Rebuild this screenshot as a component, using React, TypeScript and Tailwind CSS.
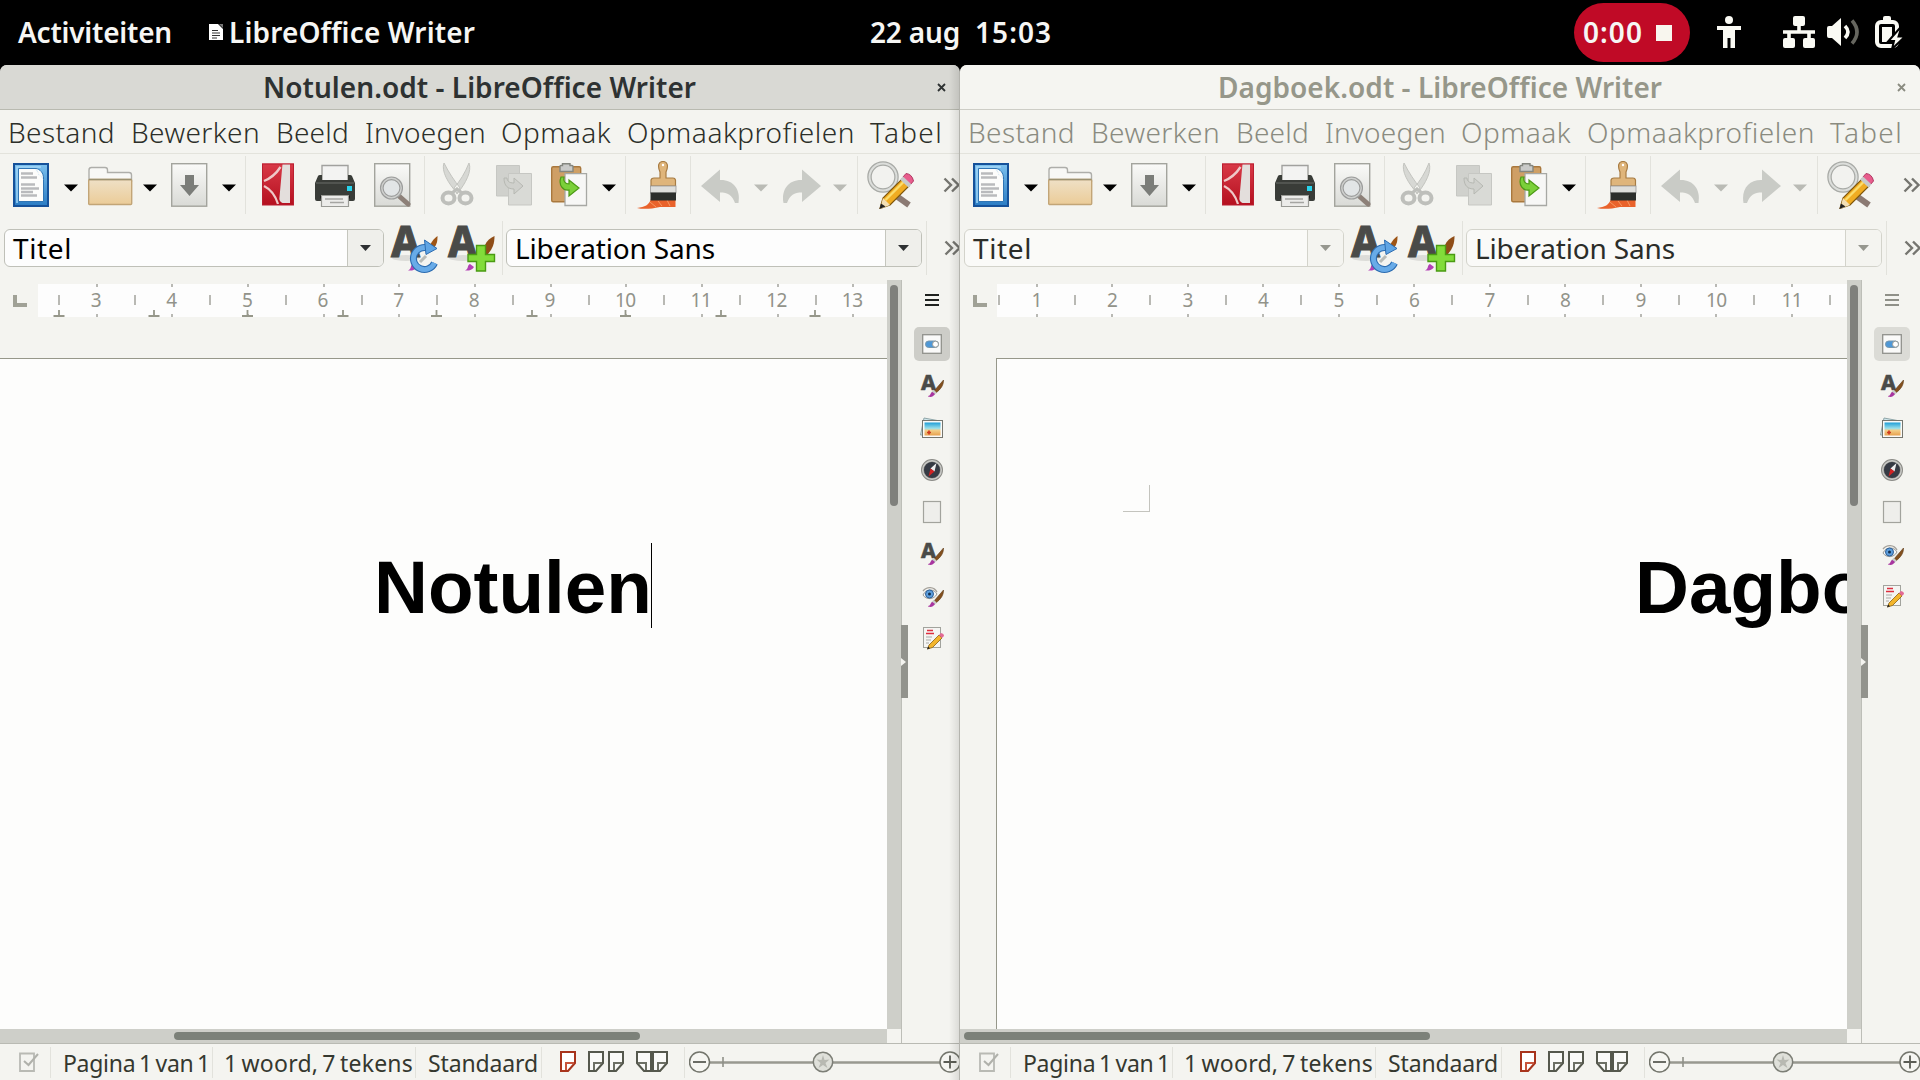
import { useLayoutEffect, useRef, useState } from "react";
import type { ReactNode } from "react";

/* Text tracked so that it fills the given width. */
function Fit({ w, className = "", children }: { w: number; className?: string; children: string }) {
  const ref = useRef<HTMLSpanElement>(null);
  const [spacing, setSpacing] = useState(0);
  useLayoutEffect(() => {
    if (ref.current) {
      const natural = ref.current.getBoundingClientRect().width;
      setSpacing((s) => s + (w - natural) / children.length);
    }
  }, [w, children]);
  return (
    <span ref={ref} className={`inline-block shrink-0 whitespace-pre ${className}`} style={{ letterSpacing: `${spacing}px` }}>
      {children}
    </span>
  );
}

function Svg({ w, h = 48, className = "", children }: { w: number; h?: number; className?: string; children: ReactNode }) {
  return (
    <svg width={w} height={h} viewBox={`0 0 ${w} ${h}`} fill="none" className={`block shrink-0 ${className}`}>
      {children}
    </svg>
  );
}

function Arrow({ className, color = "#000" }: { className: string; color?: string }) {
  return (
    <Svg w={14} h={8} className={`mt-[5px] ${className}`}>
      <path d="M0 .5H14L7 7.5Z" fill={color} />
    </Svg>
  );
}

function Sep({ className }: { className: string }) {
  return <div className={`w-px shrink-0 bg-[#e2e2dc] ${className}`} />;
}

function More({ className }: { className: string }) {
  return (
    <Svg w={17} h={16} className={className}>
      <path d="M1.5 1.5 8 8 1.5 14.5M9 1.5 15.5 8 9 14.5" stroke="#757570" strokeWidth="2.4" />
    </Svg>
  );
}

function Defs() {
  return (
    <svg width="0" height="0" className="absolute">
      <defs>
        <linearGradient id="blue" x1="0" y1="0" x2="0" y2="1">
          <stop offset="0" stopColor="#7cc0ee" />
          <stop offset="1" stopColor="#2a7cc4" />
        </linearGradient>
        <linearGradient id="tan" x1="0" y1="0" x2="0" y2="1">
          <stop offset="0" stopColor="#efe0c6" />
          <stop offset="1" stopColor="#ebcc98" />
        </linearGradient>
        <linearGradient id="paper" x1="0" y1="0" x2="0" y2="1">
          <stop offset="0" stopColor="#fafaf8" />
          <stop offset="1" stopColor="#d9dad6" />
        </linearGradient>
        <linearGradient id="red" x1="0" y1="0" x2="0" y2="1">
          <stop offset="0" stopColor="#d93a48" />
          <stop offset="1" stopColor="#b5101f" />
        </linearGradient>
        <linearGradient id="sky" x1="0" y1="0" x2="0" y2="1">
          <stop offset="0" stopColor="#1f9fd8" />
          <stop offset=".45" stopColor="#9adfea" />
          <stop offset=".6" stopColor="#f2cf8a" />
          <stop offset="1" stopColor="#e8a04c" />
        </linearGradient>
        <linearGradient id="edge" x1="0" y1="0" x2="1" y2="0">
          <stop offset="0" stopColor="#000" stopOpacity="0" />
          <stop offset="1" stopColor="#000" stopOpacity=".12" />
        </linearGradient>
      </defs>
    </svg>
  );
}

const IconNew = () => (
  <Svg w={38} className="ml-[12px]">
    <rect x="2" y="3" width="34" height="42" fill="url(#blue)" stroke="#15519a" strokeWidth="2" />
    <path d="M5 42V6H29" stroke="#a5d8f8" strokeWidth="1.5" />
    <path d="M6.5 7.5H24C28 8 31.500 12 31.500 17V40.500H6.500Z" fill="#fcfcfb" stroke="#2f75b5" />
    <path d="M23 8C27 9 27 13 26 14 30 14 31 17 31.500 19Z" fill="#d8e9f5" />
    <path d="M9 12.500H21M9 16.500H25M9 23.500H23M9 27.500H27M9 31H21M9 34.500H25" stroke="#b9babd" strokeWidth="2.400" />
  </Svg>
);
const IconOpen = () => (
  <Svg w={46} className="ml-[9px]">
    <path d="M2 20V9Q2 6.500 4.500 6.500H18Q20.500 6.500 20.500 9V11.500H42Q44.500 11.500 44.500 14V20Z" fill="#f8f8f6" stroke="#aeaeaa" strokeWidth="1.400" />
    <rect x="1.700" y="18.500" width="43" height="25" rx="1" fill="url(#tan)" stroke="#c2a577" strokeWidth="1.400" />
    <path d="M2 18.500H44.500" stroke="#9b9171" strokeWidth="1.500" />
  </Svg>
);
const IconSave = () => (
  <Svg w={38} className="ml-[13px]">
    <rect x="1.700" y="2.700" width="35" height="42.500" fill="url(#paper)" stroke="#a3a49d" strokeWidth="1.400" />
    <path d="M15 14H24V24H29L19.500 35 10 24H15Z" fill="#7b7d79" />
  </Svg>
);
const IconPdf = () => (
  <Svg w={34} className="ml-[15px]">
    <rect x="1" y="2.500" width="32" height="41.500" fill="url(#red)" />
    <path d="M21.500 3H29V42H21.500Q17.500 40 18.500 36Z" fill="#e3dedc" />
    <path d="M3 20Q13 16 19.500 6M3 25Q13 30 17 43" stroke="#efc9c9" strokeWidth="2.300" />
    <rect x="1.500" y="3" width="31" height="41" stroke="#b91f30" />
  </Svg>
);
const IconPrint = () => (
  <Svg w={42} className="ml-[19px]">
    <path d="M8 4.500H34V20H8Z" fill="#f3f3f2" stroke="#a1a19e" strokeWidth="1.400" />
    <path d="M1 22 4 15Q4.500 14 6 14H8V19H34V14H36Q37.500 14 38 15L41 22V38Q41 40 39 40H3Q1 40 1 38Z" fill="#393c38" />
    <path d="M2 22H40" stroke="#5a5d58" strokeWidth="1.500" />
    <path d="M6 36H36" stroke="#151615" strokeWidth="3" />
    <rect x="33" y="25" width="5" height="5" fill="#28d3ec" />
    <path d="M7.500 34.500H34.500V45.500H7.500Z" fill="#ececea" stroke="#9a9b96" strokeWidth="1.200" />
    <path d="M11 38H29M16 41.500H30" stroke="#a5a5a2" strokeWidth="1.400" />
  </Svg>
);
const IconPreview = () => (
  <Svg w={38} className="ml-[17px]">
    <rect x="1.700" y="2.700" width="35" height="42.500" fill="url(#paper)" stroke="#a3a49d" strokeWidth="1.400" />
    <path d="M26 35 35 43" stroke="#8d8078" strokeWidth="5" strokeLinecap="round" />
    <circle cx="18.500" cy="27" r="9.700" fill="#e2e5e6" stroke="#9c9d9c" strokeWidth="3.700" />
    <circle cx="18.500" cy="27" r="9.700" stroke="#cfd0ce" strokeWidth="1.400" />
  </Svg>
);
const IconCut = () => (
  <Svg w={34} className="ml-[15px]">
    <path d="M4 2C1 10 8 22 17 32L20 27C14 19 9 12 4 2ZM29 2C32 10 26 22 17 33L14 27C20 20 25 12 29 2Z" fill="#d7d8d4" stroke="#c3c4bf" />
    <ellipse cx="8.500" cy="37" rx="6" ry="5.500" stroke="#bebfbb" strokeWidth="4" />
    <ellipse cx="25.500" cy="37" rx="6" ry="5.500" stroke="#bebfbb" strokeWidth="4" />
    <path d="M12 32 17 28 22 32" stroke="#bebfbb" strokeWidth="3" />
  </Svg>
);
const IconCopy = () => (
  <Svg w={38} className="ml-[21px]">
    <path d="M1.500 4.500H24.500V35H1.500Z" fill="#d0d1cd" stroke="#c6c7c3" />
    <path d="M13.500 12.500H36.500V44H13.500Z" fill="#d9dad6" stroke="#c6c7c3" />
    <path d="M9 17C9 25 13 28 19 28V33L28 25 19 17V22C14 22 12 20 12 17Z" fill="#cfd0cc" stroke="#b6b8b2" />
  </Svg>
);
const IconPaste = () => (
  <Svg w={38} className="ml-[17px]">
    <rect x="1.700" y="5.700" width="29" height="35" rx="1.500" fill="#cf9f65" stroke="#a9783d" strokeWidth="1.400" />
    <path d="M10 10.500V5.500Q10 4.500 11 4.500H12.500V2.700H20V4.500H22Q23 4.500 23 5.500V10.500Z" fill="#c9cac8" stroke="#84867f" strokeWidth="1.400" />
    <path d="M15 12.700H36.500V44.500H15Z" fill="#f7f7f6" stroke="#a7a8a4" strokeWidth="1.300" />
    <path d="M11 16C8 24 13 30 19 29V35L29 27 19 19V23C15 23 13 20 14 16Z" fill="#7bd03a" stroke="#4d9a17" strokeWidth="1.200" />
  </Svg>
);
const IconBrush = () => (
  <Svg w={42} className="ml-[10px]">
    <path d="M1 47C9 46 13 44 15 38H39.500V46H24C15 48 7 48.500 1 47Z" fill="#e9622b" />
    <path d="M14 41 20 46M22 40 26 45M31 39 34 45" stroke="#f79a62" />
    <path d="M24 17V11C21 4 23 .500 27 .500S33 4 30 11V17H37Q39 17 39.500 19V25H15V19Q15.500 17 18 17Z" fill="#dfb57b" stroke="#a87c43" strokeWidth="1.200" />
    <rect x="14.500" y="25" width="25.500" height="7" fill="#dededb" stroke="#999" strokeWidth=".8" />
    <rect x="14.500" y="31.500" width="25.500" height="8" fill="#2c2e2b" />
    <circle cx="27" cy="4" r="1.200" fill="#fff" />
  </Svg>
);
function Bend({ className, flip = false }: { className: string; flip?: boolean }) {
  return (
    <Svg w={42} className={className}>
      <g transform={flip ? "translate(42 0) scale(-1 1)" : undefined}>
        <path d="M1 25 20 8.500V19C33 18.500 41 28 38.500 42H35C32 34 28 31.500 20 31.500V41Z" fill="#c9cbc6" />
      </g>
    </Svg>
  );
}
const IconFind = () => (
  <Svg w={50} className="ml-[8px]">
    <path d="M29 34 43 44" stroke="#8b7a73" strokeWidth="6" />
    <circle cx="17" cy="16" r="13.500" fill="#f2f2ef" stroke="#a8aaa6" strokeWidth="4.500" />
    <circle cx="17" cy="16" r="13.500" stroke="#dcdedb" strokeWidth="2" />
    <path d="M14 47.500 17 37 36 18 43 25 24 44Z" fill="#f0ac22" stroke="#80570c" strokeWidth="1.200" />
    <path d="M19.500 39 37.500 21" stroke="#fbdc6b" strokeWidth="2.400" />
    <path d="M37 16 40 12.500Q46 13 47.500 20L44 24Z" fill="#e85c8c" stroke="#b03a63" />
    <path d="M34 18.500 42.500 26.500 45.500 23.500 37 15.500Z" fill="#c7c9c9" />
    <path d="M14 48 17 37 24 44Z" fill="#f3dfb5" />
    <path d="M13.500 48 15 42.500 19.500 45.500Z" fill="#222" />
  </Svg>
);

function StyleIcon({ kind, className }: { kind: "update" | "new"; className: string }) {
  return (
    <Svg w={48} h={50} className={`overflow-visible ${className}`}>
      <ellipse cx="15" cy="35" rx="14" ry="3" fill="#dcdcd8" />
      <text x="0" y="33.500" fontSize="43" fontWeight="800" fontFamily="Noto Sans" textLength="29" lengthAdjust="spacingAndGlyphs" fill="#4a4b48" stroke="#4a4b48">A</text>
      <path d="M17 47.500C21 46 19 42 22 41L26 44C24 47 21 48 17 47.500Z" fill="#b341b5" />
      {kind === "update" ? (
        <>
          <path d="M46.500 13C43.500 15 41 18 39 22L43 25C46 21 46.500 18 46.500 13Z" fill="#9d5415" />
          <path d="M43.500 40A11 11 0 1 1 38 25.500" stroke="#2c6cb0" strokeWidth="7" />
          <path d="M43.500 40A11 11 0 1 1 38 25.500" stroke="#68abe8" strokeWidth="4.800" />
          <path d="M33.500 17 46 25.500 35 31.500Z" fill="#5fa5e5" stroke="#2c6cb0" />
          <path d="M35 33 29 39" stroke="#b9bcb8" strokeWidth="3" />
        </>
      ) : (
        <>
          <path d="M46.500 13C42 15 38.500 18 37 22L37 31H40C45 25 46.500 20 46.500 13Z" fill="#8f4d17" />
          <path d="M28.500 22.500H37.500V31.500H46.500V38.500H37.500V48H28.500V38.500H20V31.500H28.500Z" fill="#82dc3a" stroke="#4a9b13" strokeWidth="1.400" />
        </>
      )}
    </Svg>
  );
}

const PaintBrush = () => (
  <>
    <path d="M23.500 6 14 17 16 19C20.500 15 23.500 12 23.500 6Z" fill="#84511f" stroke="#5d3814" strokeWidth=".6" />
    <path d="M12.500 17 15.500 20" stroke="#c9ccc8" strokeWidth="3.500" />
    <path d="M8 22C11 22 10 18.500 12.500 18L15 20C13 23 11 23.500 8 22.500Z" fill="#a8359f" />
  </>
);

function SideIcon({ name }: { name: string }) {
  return (
    <Svg w={24} h={24} className="overflow-visible">
      {name === "properties" && (
        <>
          <rect x="2.700" y="2.700" width="18.600" height="18.600" fill="#fafaf9" stroke="#90918c" strokeWidth="1.300" />
          <rect x="5.500" y="9" width="13" height="6.500" rx="3.200" fill="#4e97d6" stroke="#7797ad" />
          <circle cx="15.500" cy="12.200" r="3" fill="#fff" stroke="#9a9c98" />
        </>
      )}
      {name === "styles" && (
        <>
          <text x="1" y="15.500" fontSize="21" fontWeight="800" fontFamily="Noto Sans" fill="#4a4b48" stroke="#4a4b48" strokeWidth=".5">A</text>
          <PaintBrush />
        </>
      )}
      {name === "gallery" && (
        <>
          <path d="M4 2 20 5 17 19 .500 19Z" fill="#cfe6ec" stroke="#90a6a8" />
          <rect x="2.500" y="4.500" width="20" height="17" fill="#fafaf8" stroke="#75766f" />
          <rect x="4.500" y="6.500" width="16" height="13" fill="url(#sky)" />
          <path d="M7 16.500H11M9 14.500V18.500" stroke="#d03a1e" strokeWidth="1.700" />
        </>
      )}
      {name === "navigator" && (
        <>
          <circle cx="12" cy="12" r="9.500" fill="#353a43" stroke="#8b8b86" strokeWidth="3" />
          <circle cx="12" cy="12" r="9.300" stroke="#c9cac7" strokeWidth="1.400" />
          <path d="M16.500 5 14.500 13.500 10.500 10.500Z" fill="#eee" />
          <path d="M8.500 18.500 10.500 10.500 14.500 13.500Z" fill="#d02323" />
        </>
      )}
      {name === "page" && <rect x="3.500" y="1.500" width="17" height="21" fill="#eeeeeb" stroke="#a2a39d" strokeWidth="1.200" />}
      {name === "inspector" && (
        <>
          <path d="M3 11C6 4.500 14 4.500 17 10 14 16 6 16 3 11Z" fill="#f6f6f5" stroke="#9a9b98" />
          <circle cx="9.500" cy="10" r="4" fill="#5d9edc" stroke="#2b5f99" />
          <circle cx="9.500" cy="10" r="1.500" fill="#14304f" />
          <path d="M3 7C7 2 14 2.500 17 8" stroke="#a5a19a" strokeWidth="1.300" />
          <PaintBrush />
        </>
      )}
      {name === "changes" && (
        <>
          <rect x="3.500" y="1.500" width="17" height="20" fill="#f5f5f3" stroke="#a2a39d" />
          <path d="M7 4.500H13M6 7.500H14" stroke="#dd2f3f" strokeWidth="1.700" />
          <path d="M6 11H12M6 14H11M6 17H9" stroke="#a9aaa7" />
          <path d="M7.500 23 9 19 19 9 22 12 12.500 21.500Z" fill="#f3b52c" stroke="#8a6114" strokeWidth=".8" />
          <path d="M19 9 21 7Q24 7.500 24 10L22 12Z" fill="#e36a95" />
          <path d="M7 23.500 8.300 20.500 10 22.300Z" fill="#222" />
        </>
      )}
    </Svg>
  );
}

const MENU: { label: string; w: number; gap: string }[] = [
  { label: "Bestand", w: 107, gap: "ml-[8px]" },
  { label: "Bewerken", w: 129, gap: "ml-[16px]" },
  { label: "Beeld", w: 73, gap: "ml-[16px]" },
  { label: "Invoegen", w: 121, gap: "ml-[16px]" },
  { label: "Opmaak", w: 110, gap: "ml-[15px]" },
  { label: "Opmaakprofielen", w: 228, gap: "ml-[16px]" },
  { label: "Tabel", w: 73, gap: "ml-[15px]" },
];

function Combo({ value, w, width, active, className }: { value: string; w: number; width: string; active: boolean; className: string }) {
  return (
    <div className={`flex h-[38px] shrink-0 overflow-hidden rounded-[6px] border ${width} ${className} ${active ? "border-[#bfc0b8] bg-[#fdfdfd]" : "border-[#d3d3cb] bg-[#fafaf8]"}`}>
      <div className="min-w-0 flex-1 pl-[8px]">
        <Fit w={w} className={`text-[28px] leading-[37px] ${active ? "text-black" : "text-[#2b2d29]"}`}>{value}</Fit>
      </div>
      <div className={`flex w-[36px] items-center justify-center border-l ${active ? "border-[#c5c6be] bg-[#efefeb]" : "border-[#d3d3cb] bg-[#f4f4f0]"}`}>
        <Svg w={11} h={6}>
          <path d="M0 0H11L5.500 6Z" fill={active ? "#2e3032" : "#96978f"} />
        </Svg>
      </div>
    </div>
  );
}

function Ruler({ active }: { active: boolean }) {
  const step = active ? 75.65 : 75.5;
  const first = active ? 59 : 39.2;
  const labels = active ? [3, 4, 5, 6, 7, 8, 9, 10, 11, 12, 13] : [1, 2, 3, 4, 5, 6, 7, 8, 9, 10, 11];
  const base = active ? 38 : 37;
  const tabs = active ? [59, 154, 247.500, 343, 436.500, 532, 625.500, 721, 815] : [];
  return (
    <div className="flex h-[37px] shrink-0">
      <div className="w-[37px] shrink-0 pl-[13px] pt-[15px]">
        <div className="h-[12px] w-[14px] border-b-4 border-l-4 border-[#a0a196]" />
      </div>
      <div className={`relative mt-[4px] h-[33px] flex-1 overflow-hidden bg-[#fdfdfd] ${active ? "ml-px" : ""}`}>
        <div className={`flex ${active ? "pl-[20px]" : "pl-[2px]"}`}>
          {labels.map((n) => (
            <div key={n} className={`shrink-0 text-center text-[19px] leading-[32px] tracking-[-0.5px] text-[#92938a] ${active ? "w-[75.65px]" : "w-[75.5px]"}`}>{n}</div>
          ))}
        </div>
        <Svg w={850} h={33} className="absolute left-0 top-0">
          {labels.map((n, i) => {
            const h = first - base + i * step;
            const m = h + step / 2;
            return <path key={n} d={`M${Math.round(h)} 11V21M${Math.round(m)} 0V3M${Math.round(m)} 30V33`} stroke="#a2a39c" strokeWidth="1.500" />;
          })}
          {!active && <path d={`M${Math.round(first - base + 11 * step)} 11V21`} stroke="#a2a39c" strokeWidth="1.500" />}
          {tabs.map((t) => (
            <path key={t} d={`M${t - base} 26V31.500M${t - base - 5.500} 32H${t - base + 5.500}`} stroke="#96978a" strokeWidth="1.800" />
          ))}
        </Svg>
      </div>
    </div>
  );
}

function StatusBar() {
  return (
    <div className="flex h-[37px] shrink-0 items-center overflow-hidden border-t border-[#b9bab3] text-[23px] leading-[34px] text-[#35382f]">
      <Svg w={20} h={20} className="ml-[19px]">
        <path d="M1 1.500H15V19H1Z" fill="#f4f4f0" stroke="#b9bab4" strokeWidth="1.800" />
        <path d="M5 9 9.500 13 19 2" stroke="#b0b1ab" strokeWidth="2" />
      </Svg>
      <Sep className="ml-[11px] h-[31px]" />
      <Fit w={147} className="ml-[12px] mt-[2px] [word-spacing:-2px]">Pagina 1 van 1</Fit>
      <Sep className="ml-[2px] h-[31px]" />
      <Fit w={189} className="ml-[11px] mt-[2px] [word-spacing:-2px]">1 woord, 7 tekens</Fit>
      <Sep className="ml-[2px] h-[31px]" />
      <Fit w={110} className="ml-[12px] mt-[2px]">Standaard</Fit>
      <Sep className="ml-[3px] h-[31px]" />
      <Svg w={110} h={22} className="ml-[18px]">
        <path d="M1 1H15V12L8 20H1Z" fill="#fff" stroke="#a8341c" strokeWidth="2" />
        <path d="M6 19V12H14" stroke="#c8553c" strokeWidth="2" />
        <path d="M29 1H43V12L36 20H29ZM49 1H63V12L56 20H49ZM91 1H77V12L84 20H91ZM93 1H107V12L100 20H93Z" fill="#fafaf8" stroke="#55584d" strokeWidth="2" />
        <path d="M34 19V12H42M54 19V12H62M86 19V12H78M98 19V12H106" stroke="#6d7065" strokeWidth="2" />
      </Svg>
      <Sep className="ml-[14px] h-[31px]" />
      <Svg w={276} h={24} className="ml-[4px]">
        <path d="M21 12.500H251" stroke="#989990" strokeWidth="2.600" />
        <path d="M34 7V17" stroke="#8f9088" strokeWidth="1.600" />
        <circle cx="10.500" cy="12" r="10" fill="#f6f6f2" stroke="#73756c" strokeWidth="1.500" />
        <path d="M4 12H17" stroke="#5b5d55" strokeWidth="1.800" />
        <circle cx="134" cy="12" r="9.700" fill="#dfe0da" stroke="#7c7e76" strokeWidth="1.500" />
        <path d="M134 5 135.500 10 140.500 9.500 136.500 13 138.500 18 134 15 129.500 18 131.500 13 127.500 9.500 132.500 10Z" fill="#b8b9b2" />
        <circle cx="261" cy="12" r="10" fill="#f6f6f2" stroke="#73756c" strokeWidth="1.500" />
        <path d="M254.500 12H267.500M261 5.500V18.500" stroke="#5b5d55" strokeWidth="1.800" />
      </Svg>
    </div>
  );
}

function WriterWindow({ active }: { active: boolean }) {
  const side = active
    ? ["styles", "gallery", "navigator", "page", "styles", "inspector", "changes"]
    : ["styles", "gallery", "navigator", "page", "inspector", "changes"];
  return (
    <div className={`relative flex h-full w-[960px] shrink-0 flex-col overflow-hidden rounded-t-[7px] bg-[#f4f4f0] ${active ? "border-r border-[#b4b4ae]" : ""}`}>
      <div className={`flex h-[45px] shrink-0 items-center border-b ${active ? "border-[#b9bab0] bg-[#d9d9d4] text-[#2e3232]" : "border-[#cdcdc6] bg-[#f5f5f1] text-[#96978a]"}`}>
        <Fit w={active ? 433 : 444} className={`text-[28px] font-semibold leading-[42px] ${active ? "ml-[263px]" : "ml-[258px]"}`}>
          {active ? "Notulen.odt - LibreOffice Writer" : "Dagboek.odt - LibreOffice Writer"}
        </Fit>
        <Svg w={9} h={9} className={active ? "ml-[241px]" : "ml-[235px]"}>
          <path d="M1 1 8 8M8 1 1 8" stroke={active ? "#2e3232" : "#8a8b80"} strokeWidth="1.800" />
        </Svg>
      </div>
      <div className={`flex h-[44px] shrink-0 items-start border-b border-[#e3e3dc] text-[28px] font-light leading-[45px] ${active ? "text-[#2c2f29]" : "text-[#8a8b80]"}`}>
        {MENU.map((m) => (
          <Fit key={m.label} w={m.w} className={m.gap}>{m.label}</Fit>
        ))}
      </div>
      <div className="flex h-[62px] shrink-0 items-center">
        <IconNew />
        <Arrow className="ml-[14px]" />
        <IconOpen />
        <Arrow className="ml-[10px]" />
        <IconSave />
        <Arrow className="ml-[14px]" />
        <Sep className="ml-[9px] h-[58px]" />
        <IconPdf />
        <IconPrint />
        <IconPreview />
        <Sep className="ml-[13px] h-[58px]" />
        <IconCut />
        <IconCopy />
        <IconPaste />
        <Arrow className="ml-[14px]" />
        <Sep className="ml-[9px] h-[58px]" />
        <IconBrush />
        <Sep className="ml-[12px] h-[58px]" />
        <Bend className="ml-[9px]" />
        <Arrow className="ml-[12px]" color="#babbb5" />
        <Bend className="ml-[12px]" flip />
        <Arrow className="ml-[11px]" color="#babbb5" />
        <Sep className="ml-[10px] h-[58px]" />
        <IconFind />
        <More className="ml-[27px]" />
      </div>
      <div className="flex h-[64px] shrink-0 items-center">
        <Combo value="Titel" w={59} width="w-[380px]" active={active} className="ml-[4px]" />
        <StyleIcon kind="update" className="ml-[7px]" />
        <StyleIcon kind="new" className="ml-[9px]" />
        <Sep className="ml-[6px] h-[54px]" />
        <Combo value="Liberation Sans" w={200} width="w-[416px]" active={active} className="ml-[3px]" />
        <Sep className="ml-[4px] h-[54px]" />
        <More className="ml-[17px]" />
      </div>
      <div className="flex min-h-0 flex-1">
        <div className="flex w-[887px] shrink-0 flex-col">
          <Ruler active={active} />
          <div className="h-[41px] shrink-0" />
          <div className={`min-h-0 flex-1 overflow-hidden border-t-[1.5px] border-[#96978a] bg-[#fdfdfc] ${active ? "" : "ml-[36px] border-l-[1.5px]"}`}>
            {active ? (
              <div className="flex pl-[374px] pt-[184px]">
                <span className="font-['Liberation_Sans'] text-[74.670px] font-bold leading-[88px] text-black">Notulen</span>
                <div className="-ml-px h-[85px] w-px bg-black" />
              </div>
            ) : (
              <>
                <div className="ml-[126px] mt-[126px] h-[27px] w-[27px] border-b border-r border-[#c4c4be]" />
                <div className="whitespace-nowrap pl-[638px] pt-[31px] font-['Liberation_Sans'] text-[74.670px] font-bold leading-[88px] text-black">Dagboek</div>
              </>
            )}
          </div>
          <div className="flex h-[14px] shrink-0 items-center bg-[#cecfc9]">
            <div className={`h-[8px] w-[466px] rounded-full bg-[#7c8179] ${active ? "ml-[174px]" : "ml-[4px]"}`} />
          </div>
        </div>
        <div className="flex w-[15px] shrink-0 flex-col border-r border-[#bdbeb8]">
          <div className="flex flex-1 justify-center bg-[#cecfc9] pt-[5px]">
            <div className="h-[221px] w-[8px] rounded-full bg-[#7f807c]" />
          </div>
          <div className="h-[14px] shrink-0" />
        </div>
        <div className="-ml-px w-[7px] shrink-0 pt-[345px]">
          <div className="flex h-[73px] items-center bg-[#92938d]">
            <Svg w={6} h={8}>
              <path d="M0 0 5 4 0 8Z" fill="#f4f4f0" />
            </Svg>
          </div>
        </div>
        <div className="flex w-[47px] shrink-0 flex-col items-center pt-[14px]">
          <div className="flex h-[12px] w-[14px] flex-col justify-between">
            {[0, 1, 2].map((i) => (
              <div key={i} className={`h-[2px] ${active ? "bg-[#1f211f]" : "bg-[#8f9088]"}`} />
            ))}
          </div>
          <div className={`mt-[21px] flex h-[34px] w-[36px] items-center justify-center rounded-[5px] ${active ? "bg-[#cdcdc8]" : "bg-[#dbdbd6]"}`}>
            <SideIcon name="properties" />
          </div>
          <div className="mt-[13px] flex flex-col gap-[18px]">
            {side.map((name, i) => (
              <SideIcon key={i} name={name} />
            ))}
          </div>
        </div>
      </div>
      <StatusBar />
      {active && <div className="absolute inset-y-0 right-0 w-[10px] bg-linear-to-r from-black/0 to-black/10" />}
    </div>
  );
}

function TopBar() {
  return (
    <div className="flex h-[65px] shrink-0 items-start bg-black text-[28px] font-semibold leading-[65px] text-[#f6f6f4]">
      <Fit w={154} className="ml-[18px]">Activiteiten</Fit>
      <Svg w={14} h={16} className="ml-[37px] mt-[24px]">
        <path d="M0 0H9L14 5V16H0Z" fill="#fff" />
        <path d="M10 0H14V4Z" fill="#777" />
        <path d="M3 6.500H9M3 9H11M3 11.500H11M3 14H8" stroke="#333" />
      </Svg>
      <Fit w={246} className="ml-[6px]">LibreOffice Writer</Fit>
      <Fit w={90} className="ml-[395px]">22 aug</Fit>
      <Fit w={77} className="ml-[15px]">15:03</Fit>
      <div className="ml-[522px] mt-[3px] flex h-[59px] w-[116px] shrink-0 items-center rounded-full bg-[#c00a26] leading-[59px]">
        <Fit w={60} className="ml-[9px]">0:00</Fit>
        <div className="ml-[13px] h-[16px] w-[16px] bg-[#f8f6ee]" />
      </div>
      <Svg w={24} h={32} className="ml-[27px] mt-[16px]">
        <circle cx="12" cy="4" r="4" fill="#fafaf4" />
        <path d="M0 10H24V14H18V32H13.500V22H10.500V32H6V14H0Z" fill="#fafaf4" />
      </Svg>
      <Svg w={32} h={32} className="ml-[42px] mt-[16px]">
        <rect x="10" y="0" width="12" height="10" rx="2" fill="#fafaf4" />
        <rect x="0" y="22" width="12" height="10" rx="2" fill="#fafaf4" />
        <rect x="20" y="22" width="12" height="10" rx="2" fill="#fafaf4" />
        <path d="M16 9V16M0 16H32M6 16V23M26 16V23" stroke="#fafaf4" strokeWidth="3.600" />
      </Svg>
      <Svg w={34} h={32} className="ml-[12px] mt-[16px]">
        <path d="M0 12Q0 10 2 10H5L14 2V30L5 22H2Q0 22 0 20Z" fill="#fafaf4" />
        <path d="M18 10Q24 16 18 22" stroke="#fafaf4" strokeWidth="3.600" />
        <path d="M25 4.500Q35 16 25 27.500" stroke="#66665f" strokeWidth="3.600" />
      </Svg>
      <Svg w={30} h={32} className="ml-[14px] mt-[16px]">
        <path d="M8 5V2Q8 0 10 0H14Q16 0 16 2V5Z" fill="#fafaf4" />
        <rect x="2" y="6" width="20" height="24" rx="4" stroke="#fafaf4" strokeWidth="4" />
        <rect x="7" y="11" width="10" height="15" fill="#fafaf4" />
        <path d="M24.500 12.500 13.500 25H19L17 33 30 20.500H23.500L25.500 14Z" fill="#fafaf4" stroke="#000" strokeWidth="2" />
      </Svg>
    </div>
  );
}

export default function App() {
  return (
    <div className="flex h-[1080px] w-[1920px] flex-col overflow-hidden bg-black font-['Noto_Sans',sans-serif]">
      <Defs />
      <TopBar />
      <div className="flex min-h-0 flex-1">
        <WriterWindow active />
        <WriterWindow active={false} />
      </div>
    </div>
  );
}
